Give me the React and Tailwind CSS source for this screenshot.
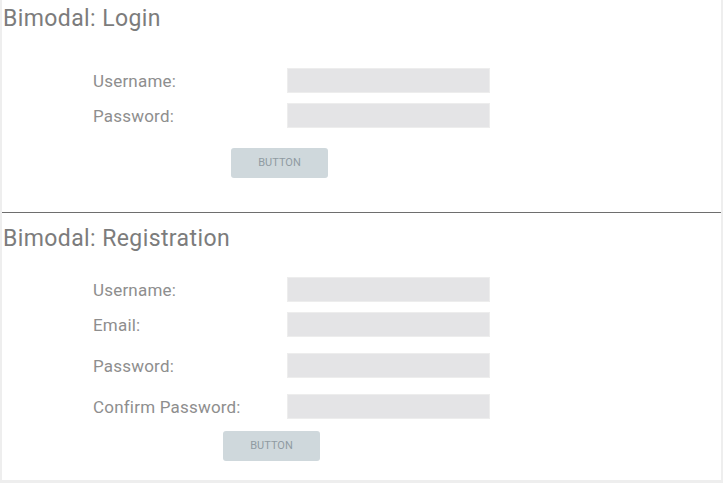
import React from 'react';

const font = { fontFamily: 'Roboto, "Liberation Sans", sans-serif' };

function Field({ label, className = '' }) {
  return (
    <div className={`flex items-center ${className}`}>
      <div className="w-[194px] text-[17px] leading-[20px] tracking-[0.2px] text-[#8e8e8e]">{label}</div>
      <div className="w-[203px] h-[25px] bg-[#e4e4e6] border border-[#ededed]" />
    </div>
  );
}

function Btn({ className = '' }) {
  return (
    <button className={`w-[97px] h-[30px] rounded-[3px] bg-[#cfd8dc] text-[11px] text-[#8f9ba2] ${className}`}>
      BUTTON
    </button>
  );
}

export default function App() {
  return (
    <div style={font} className="w-[723px] h-[483px] bg-[#eeeeee] overflow-hidden">
      <div className="ml-[2px] w-[719px] h-[480px] bg-white flex flex-col">
        <section className="h-[212px] border-b border-[#6e6e6e] box-content">
          <h1 className="pl-[1px] pt-[5px] text-[23px] leading-[28px] tracking-[0.4px] font-normal text-[#7c7c7c]">Bimodal: Login</h1>
          <div className="pl-[91px] mt-[35px] flex flex-col">
            <Field label="Username:" />
            <Field label="Password:" className="mt-[10px]" />
          </div>
          <Btn className="ml-[229px] mt-[20px] h-[29px]" />
        </section>
        <section className="flex-1">
          <h1 className="pl-[1px] pt-[12px] text-[23px] leading-[28px] tracking-[0.4px] font-normal text-[#7c7c7c]">Bimodal: Registration</h1>
          <div className="pl-[91px] mt-[24px] flex flex-col">
            <Field label="Username:" />
            <Field label="Email:" className="mt-[10px]" />
            <Field label="Password:" className="mt-[16px]" />
            <Field label="Confirm Password:" className="mt-[16px]" />
          </div>
          <Btn className="ml-[221px] mt-[12px]" />
        </section>
      </div>
    </div>
  );
}
